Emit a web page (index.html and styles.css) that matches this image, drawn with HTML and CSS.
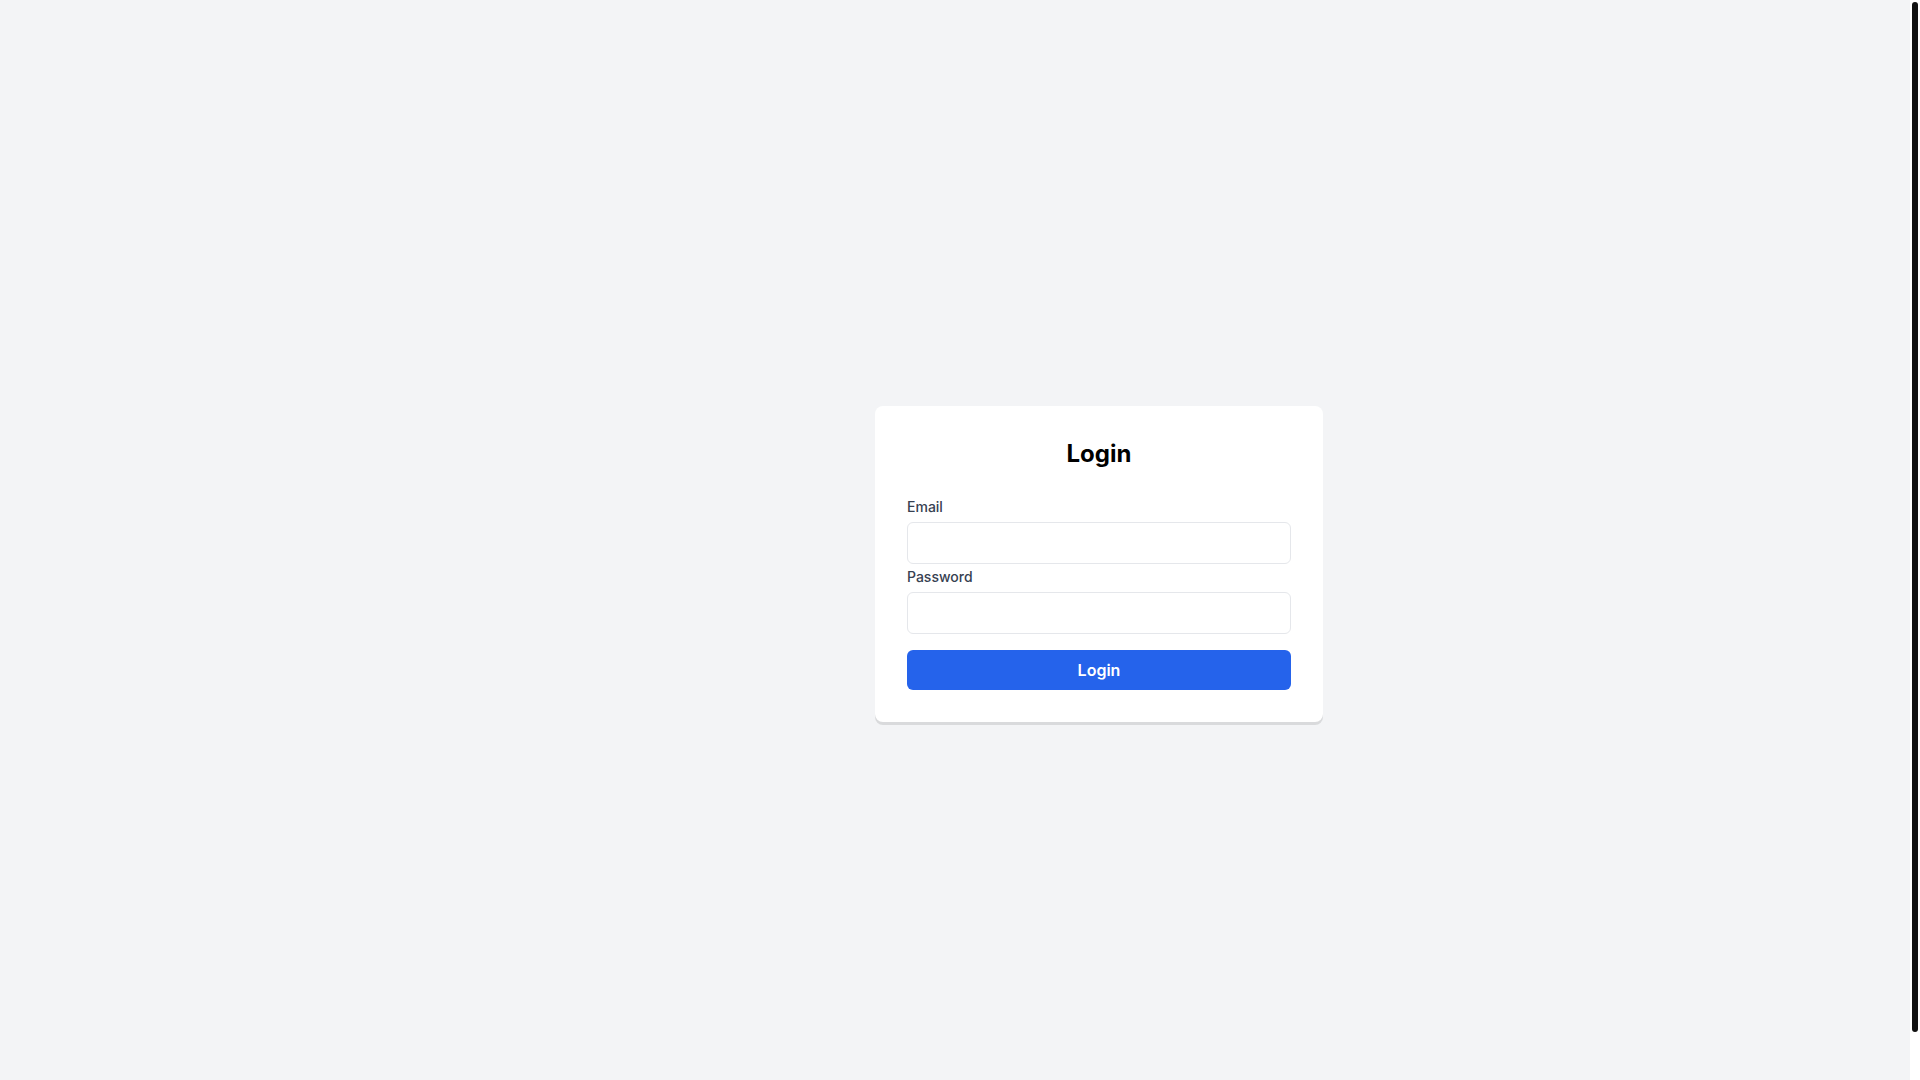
FILE: index.html
```html
<!DOCTYPE html>
<html lang="en">

<head>
    <meta charset="utf-8">
    <meta name="viewport" content="width=device-width, initial-scale=1.0">
    <title>Login</title>
    <link rel="stylesheet" href="styles.css">
</head>

<body>
    <main class="content">
        <div class="login-page">
            <form class="card">
                <h1 class="title">Login</h1>
                <div class="field">
                    <label for="email">Email</label>
                    <input type="email" id="email" name="email" required>
                </div>
                <div class="field">
                    <label for="password">Password</label>
                    <input type="password" id="password" name="password" required>
                </div>
                <button type="submit" class="btn">Login</button>
            </form>
        </div>
    </main>
    <div class="scrollbar" aria-hidden="true">
        <div class="thumb"></div>
    </div>
</body>

</html>
```
FILE: styles.css
```css
* {
    box-sizing: border-box;
}

html {
    scrollbar-width: none;
}

body {
    display: flex;
    align-items: flex-start;
    margin: 0;
    font-family: Inter, sans-serif;
    font-size: 16px;
    line-height: 24px;
    background-color: #f3f4f6;
}

.scrollbar {
    position: sticky;
    top: 0;
    width: 10px;
    height: 100vh;
    padding: 2px;
    background-color: white;
}

.thumb {
    height: calc(100% - 46px);
    background-color: #111111;
    border-radius: 4px;
}

.content {
    flex: 1;
    margin-left: 288px;
    padding: 24px;
}

.login-page {
    display: flex;
    align-items: center;
    justify-content: center;
    min-height: 100vh;
}

.card {
    width: 100%;
    max-width: 448px;
    padding: 32px;
    background-color: white;
    border-radius: 8px;
    box-shadow: 0 3px 0 #d9dadc;
}

.title {
    margin: 0 0 24px;
    font-size: 24px;
    line-height: 32px;
    font-weight: 700;
    text-align: center;
    color: black;
}

.field label {
    font-size: 14px;
    line-height: 20px;
    font-weight: 500;
    color: #374151;
}

.field input {
    display: block;
    width: 100%;
    height: 42px;
    margin-top: 4px;
    padding: 8px 12px;
    font: inherit;
    background-color: white;
    border: 1px solid #e5e7eb;
    border-radius: 6px;
}

.btn {
    display: block;
    width: 100%;
    margin-top: 16px;
    padding: 8px 16px;
    font: inherit;
    font-weight: 600;
    color: white;
    background-color: #2563eb;
    border: none;
    border-radius: 6px;
    cursor: pointer;
}

.btn:hover {
    background-color: #1d4ed8;
}

@media only screen and (max-width: 868px) {
    .content {
        margin-left: 0;
    }
}
```
